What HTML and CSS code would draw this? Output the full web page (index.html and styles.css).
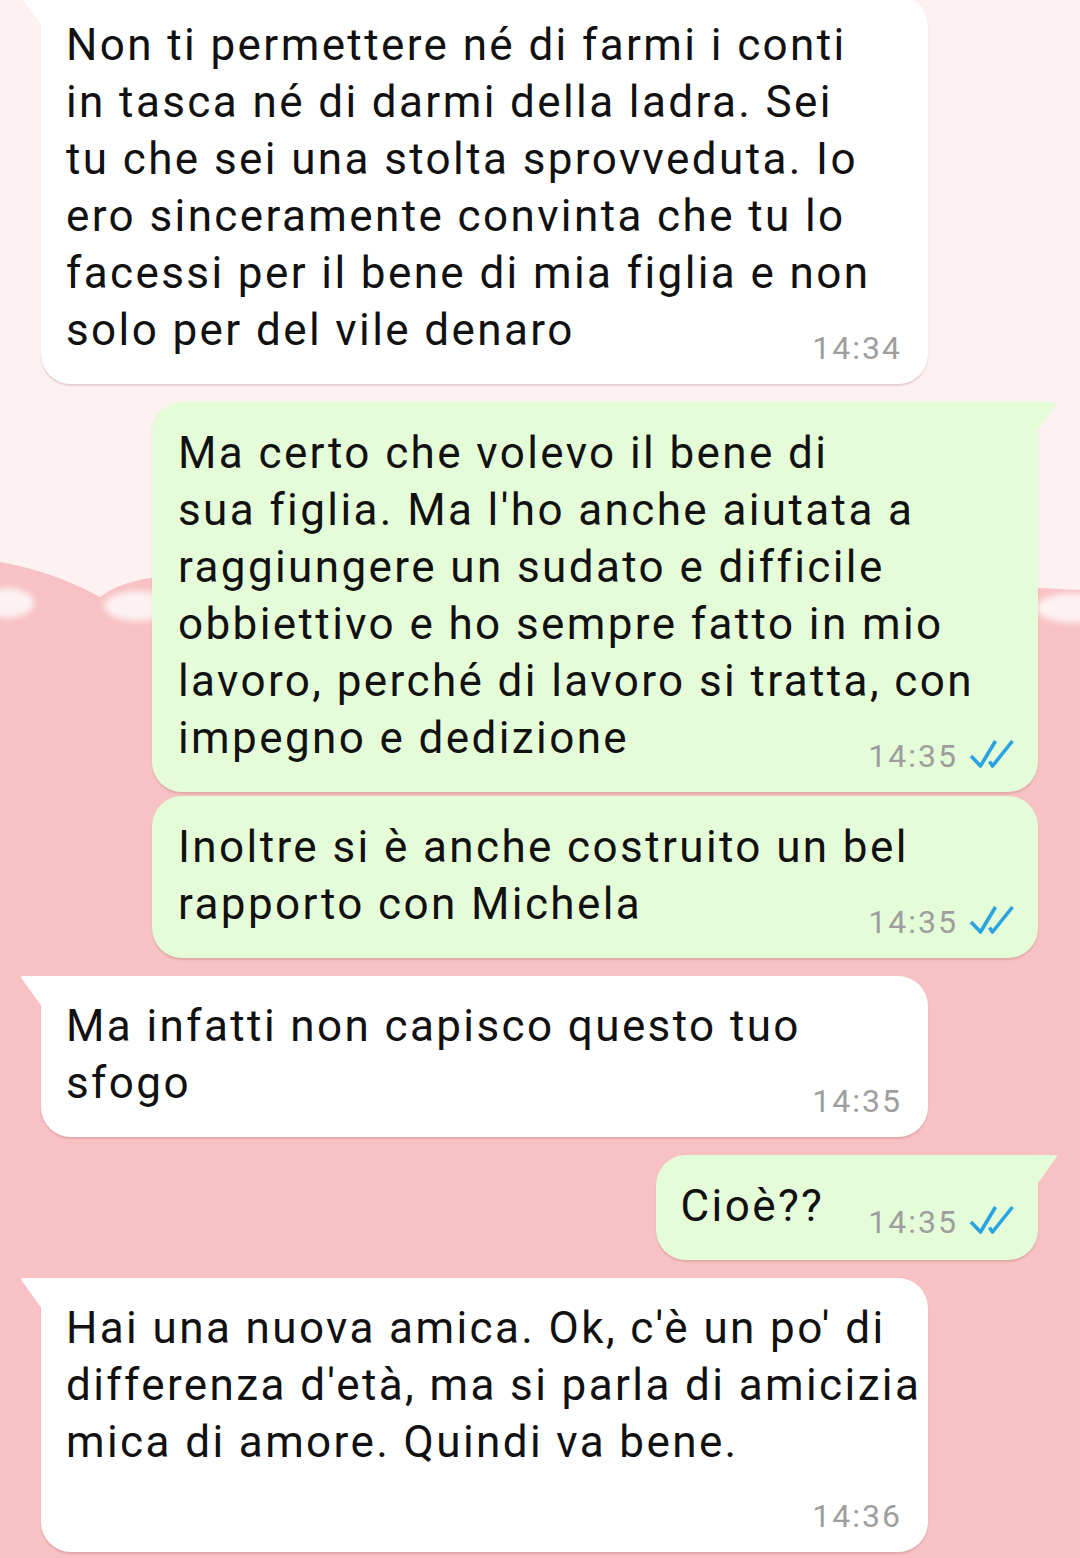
FILE: index.html
```html
<!DOCTYPE html>
<html lang="it">
<head>
<meta charset="utf-8">
<title>Chat</title>
<link rel="stylesheet" href="styles.css">
</head>
<body>
<div class="wall">
  <svg class="wall-art" width="1080" height="1558" viewBox="0 0 1080 1558" xmlns="http://www.w3.org/2000/svg">
    <defs>
      <filter id="soft" x="-20%" y="-50%" width="140%" height="200%"><feGaussianBlur stdDeviation="3"/></filter>
    </defs>
    <rect width="1080" height="1558" fill="#fdf1f1"/>
    <path d="M0,562 Q55,572 100,597 Q122,580 165,576 L600,575 Q900,580 1040,588 L1080,590 L1080,1558 L0,1558 Z" fill="#f8c1c3"/>
    <ellipse cx="8" cy="603" rx="26" ry="15" fill="#fdf2f2" filter="url(#soft)"/>
    <ellipse cx="138" cy="606" rx="34" ry="15" fill="#fdf2f2" filter="url(#soft)"/>
    <ellipse cx="1072" cy="608" rx="36" ry="15" fill="#fdf2f2" filter="url(#soft)"/>
  </svg>

  <div class="chat">
    <div class="bubble in tail first">
      <div class="text">Non ti permettere né di farmi i conti<br>in tasca né di darmi della ladra. Sei<br>tu che sei una stolta sprovveduta. Io<br>ero sinceramente convinta che tu lo<br>facessi per il bene di mia figlia e non<br>solo per del vile denaro</div>
      <div class="meta"><span class="time">14:34</span></div>
    </div>

    <div class="bubble out tail gap">
      <div class="text">Ma certo che volevo il bene di<br>sua figlia. Ma l'ho anche aiutata a<br>raggiungere un sudato e difficile<br>obbiettivo e ho sempre fatto in mio<br>lavoro, perché di lavoro si tratta, con<br>impegno e dedizione</div>
      <div class="meta"><span class="time">14:35</span><svg class="ticks" width="46" height="30" viewBox="0 0 46 30"><path d="M2,17 L11.5,27 L26.5,2 M20.5,22.5 L23.5,27 L43.5,2" fill="none" stroke="#2aa3e2" stroke-width="3.6" stroke-linejoin="round"/></svg></div>
    </div>

    <div class="bubble out near">
      <div class="text">Inoltre si è anche costruito un bel<br>rapporto con Michela</div>
      <div class="meta"><span class="time">14:35</span><svg class="ticks" width="46" height="30" viewBox="0 0 46 30"><path d="M2,17 L11.5,27 L26.5,2 M20.5,22.5 L23.5,27 L43.5,2" fill="none" stroke="#2aa3e2" stroke-width="3.6" stroke-linejoin="round"/></svg></div>
    </div>

    <div class="bubble in tail gap">
      <div class="text">Ma infatti non capisco questo tuo<br>sfogo</div>
      <div class="meta"><span class="time">14:35</span></div>
    </div>

    <div class="bubble out tail short gap">
      <div class="text">Cioè??</div>
      <div class="meta"><span class="time">14:35</span><svg class="ticks" width="46" height="30" viewBox="0 0 46 30"><path d="M2,17 L11.5,27 L26.5,2 M20.5,22.5 L23.5,27 L43.5,2" fill="none" stroke="#2aa3e2" stroke-width="3.6" stroke-linejoin="round"/></svg></div>
    </div>

    <div class="bubble in tail gap">
      <div class="text">Hai una nuova amica. Ok, c'è un po' di<br>differenza d'età, ma si parla di amicizia<br>mica di amore. Quindi va bene.</div>
      <div class="meta own-line"><span class="time">14:36</span></div>
    </div>
  </div>
</div>
</body>
</html>
```

FILE: styles.css
```css
* { box-sizing: border-box; }

html, body {
  margin: 0;
  padding: 0;
}

body {
  width: 1080px;
  height: 1558px;
  overflow: hidden;
  font-family: Roboto, "Noto Sans", "Liberation Sans", sans-serif;
  color: #111;
}

.wall {
  position: relative;
  width: 1080px;
  height: 1558px;
  overflow: hidden;
}

.wall-art {
  position: absolute;
  left: 0;
  top: 0;
  z-index: 0;
}

.chat {
  position: relative;
  z-index: 1;
  display: flex;
  flex-direction: column;
}

.bubble {
  position: relative;
  border-radius: 30px;
  box-shadow: 0 1.5px 1.5px rgba(120, 60, 60, 0.18);
}

.bubble.in {
  align-self: flex-start;
  margin-left: 41px;
  width: 887px;
  background: #ffffff;
  padding: 22px 26px 16px 25px;
}

.bubble.out {
  align-self: flex-end;
  margin-right: 42px;
  width: 886px;
  background: #e5fcd8;
  padding: 23px 23px 16px 26px;
}

.bubble.first { margin-top: -5px; }
.bubble.gap { margin-top: 18px; }
.bubble.near { margin-top: 4px; }

.bubble.in.tail { border-top-left-radius: 0; }
.bubble.out.tail { border-top-right-radius: 0; }

.bubble.tail::before {
  content: "";
  position: absolute;
  top: 0;
  width: 22px;
  height: 31px;
}

.bubble.in.tail::before {
  left: -21px;
  background: #ffffff;
  clip-path: polygon(0 0, 100% 0, 100% 100%);
  border-top-left-radius: 4px;
}

.bubble.out.tail::before {
  right: -20px;
  background: #e5fcd8;
  clip-path: polygon(0 0, 100% 0, 0 100%);
  border-top-right-radius: 4px;
}

.text {
  font-size: 44px;
  line-height: 57px;
  letter-spacing: 2.4px;
  white-space: nowrap;
}

.meta {
  display: flex;
  justify-content: flex-end;
  align-items: center;
  gap: 11px;
  height: 40px;
  margin-top: -31px;
}

.meta.own-line {
  margin-top: 25px;
  padding-bottom: 1px;
}

.time {
  font-size: 32px;
  letter-spacing: 2px;
  color: #9e9e9e;
  line-height: 40px;
}

.ticks {
  display: block;
  margin-top: -4px;
}

.bubble.short {
  width: auto;
  display: flex;
  align-items: flex-start;
  gap: 44px;
  padding: 23px 23px 18px 25px;
}

.bubble.short .meta {
  margin-top: 24px;
}
```
